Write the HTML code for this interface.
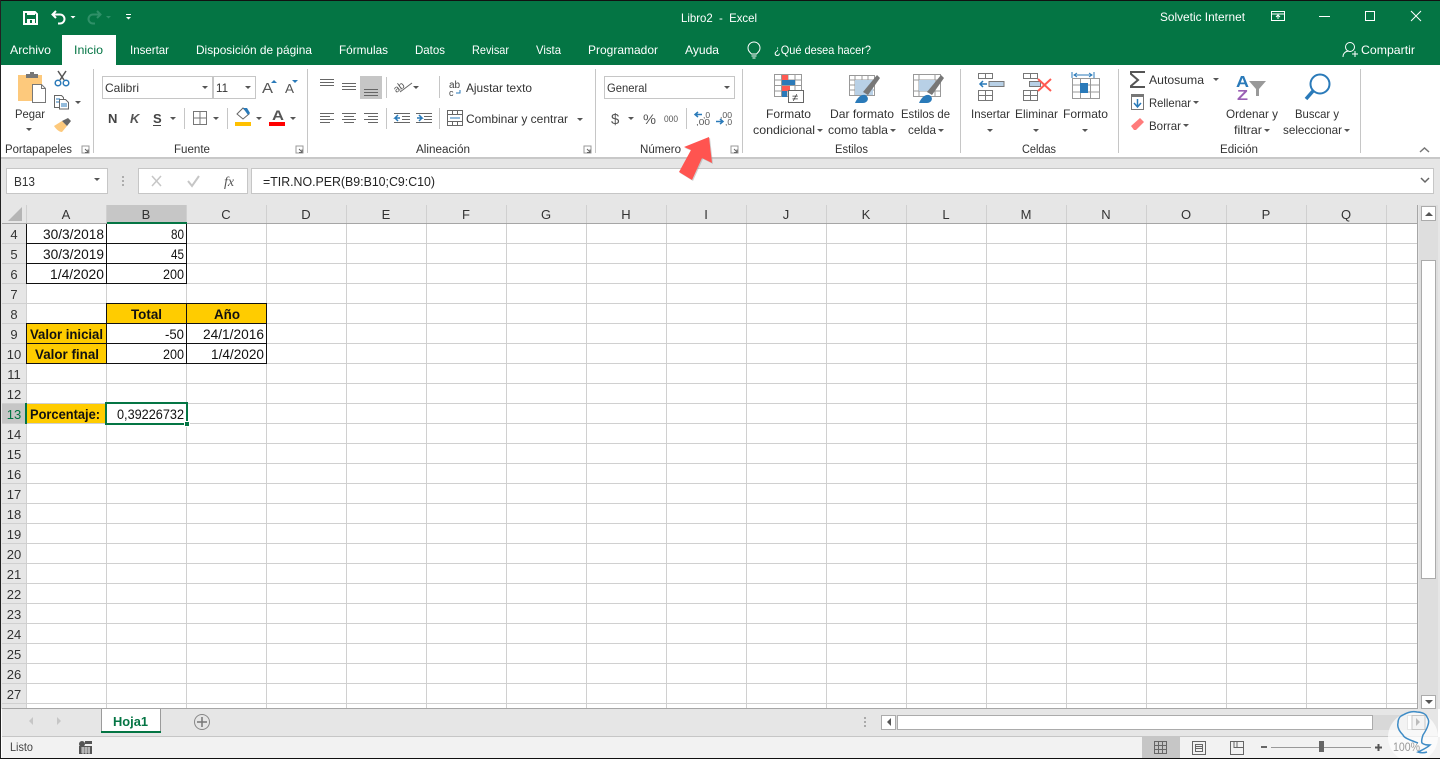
<!DOCTYPE html>
<html><head><meta charset="utf-8"><title>Libro2 - Excel</title>
<style>
html,body{margin:0;padding:0;background:#fff;width:1440px;height:759px;overflow:hidden}
svg{display:block;font-family:"Liberation Sans",sans-serif}
.w{fill:#fff;font-size:12px}
.r{fill:#333;font-size:12px}
.g{fill:#333;font-size:11.5px}
.c{fill:#111;font-size:13.5px}
.b{fill:#111;font-size:13.5px;font-weight:bold}
.h{fill:#333;font-size:13px;text-anchor:middle}
.l{stroke:#666;stroke-width:1;fill:none}
</style></head><body>
<svg width="1440" height="759" viewBox="0 0 1440 759" xmlns="http://www.w3.org/2000/svg">
<defs><path id="dd" d="M-3 0h6l-3 3z" fill="#555"/><path id="ddw" d="M-2.500 0h5l-2.500 2.500z" fill="#fff"/>
<g id="lch"><path d="M0 0h7v7h-7z" fill="none" stroke="#999"/><path d="M3 3l3 3M6 3.500v3h-3" fill="none" stroke="#666"/></g></defs>
<!-- backgrounds -->
<rect width="1440" height="759" fill="#fff"/>
<rect width="1440" height="65" fill="#047544"/>
<rect y="0" width="1440" height="1" fill="#111"/>
<rect x="62" y="35" width="54" height="30" fill="#fff"/>
<rect y="65" width="1440" height="92" fill="#fff"/>
<rect y="157" width="1440" height="2" fill="#c8c8c8"/>
<rect y="159" width="1440" height="550" fill="#e6e6e6"/>
<!-- title -->
<text class="w" x="681" y="22" textLength="76" lengthAdjust="spacingAndGlyphs" xml:space="preserve">Libro2  -  Excel</text>
<text class="w" x="1160" y="21" textLength="85" lengthAdjust="spacingAndGlyphs">Solvetic Internet</text>
<!-- QAT -->
<path d="M24 12h11l2 2v10h-13z" fill="none" stroke="#fff" stroke-width="2"/>
<rect x="27" y="11" width="8" height="4" fill="#fff"/><rect x="27" y="19" width="8" height="5" fill="#fff"/><rect x="30" y="20" width="2" height="3" fill="#047544"/>
<path d="M56 11l-3.500 3.500 3.500 3.500M53 14.500h7a4.500 4.500 0 0 1 0 9h-2" fill="none" stroke="#fff" stroke-width="2"/>
<use href="#ddw" x="73" y="16"/>
<path d="M97 11l3.500 3.500-3.500 3.500M100 14.500h-7a4.500 4.500 0 0 0 0 9h2" fill="none" stroke="#2f9068" stroke-width="2"/>
<path d="M106 16h5l-2.500 2.500z" fill="#2f9068"/>
<path d="M126 14h5v1h-5z" fill="#fff"/><use href="#ddw" x="128.500" y="17"/>
<!-- window controls -->
<path d="M1271.500 11.500h13v9h-13zM1271.500 14h13M1278 19v-4M1276 17l2-2 2 2" fill="none" stroke="#fff"/>
<rect x="1319" y="16" width="11" height="1" fill="#fff"/>
<rect x="1365.500" y="11.500" width="9" height="9" fill="none" stroke="#fff"/>
<path d="M1411 11l10 10M1421 11l-10 10" stroke="#fff" fill="none"/>
<!-- tabs -->
<text class="w" x="10" y="54" textLength="41" lengthAdjust="spacingAndGlyphs">Archivo</text>
<text x="74" y="54" font-size="12" fill="#047544" textLength="29" lengthAdjust="spacingAndGlyphs">Inicio</text>
<text class="w" x="130" y="54" textLength="39" lengthAdjust="spacingAndGlyphs">Insertar</text>
<text class="w" x="196" y="54" textLength="116" lengthAdjust="spacingAndGlyphs">Disposición de página</text>
<text class="w" x="339" y="54" textLength="49" lengthAdjust="spacingAndGlyphs">Fórmulas</text>
<text class="w" x="415" y="54" textLength="30" lengthAdjust="spacingAndGlyphs">Datos</text>
<text class="w" x="472" y="54" textLength="37" lengthAdjust="spacingAndGlyphs">Revisar</text>
<text class="w" x="536" y="54" textLength="25" lengthAdjust="spacingAndGlyphs">Vista</text>
<text class="w" x="588" y="54" textLength="70" lengthAdjust="spacingAndGlyphs">Programador</text>
<text class="w" x="685" y="54" textLength="34" lengthAdjust="spacingAndGlyphs">Ayuda</text>
<text class="w" x="774" y="54" textLength="97" lengthAdjust="spacingAndGlyphs">¿Qué desea hacer?</text>
<text class="w" x="1361" y="54" textLength="54" lengthAdjust="spacingAndGlyphs">Compartir</text>
<path d="M751.500 54c-2-2-3.500-3.500-3.500-6a6 6 0 0 1 12 0c0 2.500-1.500 4-3.500 6zM751.500 56h5M752.500 58h3" fill="none" stroke="#fff"/>
<circle cx="1350" cy="47" r="4.500" fill="none" stroke="#fff"/><path d="M1343 57c0-4 3-6 6-6M1352 54h6M1355 51v6" fill="none" stroke="#fff"/>
<!-- ribbon separators -->
<path d="M93.500 69v84M307.500 69v84M595.500 69v84M742.500 69v84M960.500 69v84M1118.500 69v84M1360.500 69v84" stroke="#c6c6c6"/>
<path d="M184.500 108v21M227.500 108v21M386.500 77v21M386.500 108v21M439.500 76v22M439.500 108v21M686.500 108v21" stroke="#c6c6c6"/>
<!-- group labels -->
<text class="g" x="5" y="153" textLength="67" lengthAdjust="spacingAndGlyphs">Portapapeles</text>
<text class="g" x="174" y="153" textLength="36" lengthAdjust="spacingAndGlyphs">Fuente</text>
<text class="g" x="416" y="153" textLength="54" lengthAdjust="spacingAndGlyphs">Alineación</text>
<text class="g" x="640" y="153" textLength="41" lengthAdjust="spacingAndGlyphs">Número</text>
<text class="g" x="835" y="153" textLength="33" lengthAdjust="spacingAndGlyphs">Estilos</text>
<text class="g" x="1022" y="153" textLength="34" lengthAdjust="spacingAndGlyphs">Celdas</text>
<text class="g" x="1220" y="153" textLength="38" lengthAdjust="spacingAndGlyphs">Edición</text>
<use href="#lch" x="82" y="146"/><use href="#lch" x="296" y="146"/><use href="#lch" x="584" y="146"/><use href="#lch" x="731" y="146"/>
<!-- clipboard -->
<rect x="18" y="75" width="24" height="26" fill="#fdc97c"/>
<path d="M26 74h4v-2h4v2h4v4h-12z" fill="#777"/>
<path d="M32.500 84.500h9l4 4v14h-13z" fill="#fff" stroke="#777"/><path d="M41.500 84.500v4h4" fill="none" stroke="#777"/>
<text class="r" x="15" y="118" textLength="30" lengthAdjust="spacingAndGlyphs">Pegar</text><use href="#dd" x="29" y="128"/>
<!-- scissors -->
<path d="M58 71l6 9M66 71l-6 9" stroke="#555" stroke-width="1.500" fill="none"/>
<circle cx="58" cy="83" r="2.800" fill="none" stroke="#2a7ab9" stroke-width="1.500"/><circle cx="66" cy="83" r="2.800" fill="none" stroke="#2a7ab9" stroke-width="1.500"/>
<!-- copy -->
<path d="M54.500 95.500h7l2 2v10h-9z" fill="#fff" stroke="#666"/><path d="M59.500 99.500h6l3 3v6.500h-9z" fill="#fff" stroke="#666"/>
<path d="M56 99h4M56 102h3M61 104h6M61 106h6" stroke="#2a7ab9"/><use href="#dd" x="78" y="101"/>
<!-- brush -->
<path d="M54 126l8-5 5 5-5 6c-3 0-6-3-8-6z" fill="#fdc97c"/><path d="M62 121l6-3 3 3-4 5z" fill="#666"/>
<!-- font -->
<rect x="102.500" y="76.500" width="110" height="22" fill="#fff" stroke="#c6c6c6"/>
<rect x="213.500" y="76.500" width="42" height="22" fill="#fff" stroke="#c6c6c6"/>
<text class="r" x="105" y="92" textLength="34" lengthAdjust="spacingAndGlyphs">Calibri</text>
<text class="r" x="216" y="92" textLength="12" lengthAdjust="spacingAndGlyphs">11</text>
<use href="#dd" x="205" y="86"/><use href="#dd" x="248" y="86"/>
<text x="262" y="93" font-size="15" fill="#555" textLength="11" lengthAdjust="spacingAndGlyphs">A</text><path d="M271 83h6l-3-3z" fill="#2a7ab9"/>
<text x="285" y="93" font-size="13" fill="#555" textLength="9" lengthAdjust="spacingAndGlyphs">A</text><path d="M292 80h6l-3 3z" fill="#2a7ab9"/>
<text x="108" y="123" font-size="13" font-weight="bold" fill="#444">N</text>
<text x="130" y="123" font-size="13" font-weight="bold" font-style="italic" fill="#555">K</text>
<text x="153" y="123" font-size="13" font-weight="bold" fill="#444">S</text><rect x="153" y="125" width="8" height="1" fill="#444"/>
<use href="#dd" x="173" y="117"/>
<path d="M193.500 111.500h13v13h-13zM200 111.500v13M193.500 118h13" fill="none" stroke="#777"/><use href="#dd" x="216" y="117"/>
<path d="M237 114l6-6 6 6-6 5z" fill="#fff" stroke="#666"/><path d="M243 108l4-0 3 5-2 2z" fill="#2a7ab9"/>
<rect x="235" y="122" width="16" height="4" fill="#ffc000"/><use href="#dd" x="259" y="117"/>
<text x="272" y="120" font-size="14" font-weight="bold" fill="#555" textLength="12" lengthAdjust="spacingAndGlyphs">A</text>
<rect x="269" y="122" width="16" height="4" fill="#f00"/><use href="#dd" x="293" y="117"/>
<!-- alignment -->
<rect x="360" y="76" width="22" height="23" fill="#c6c6c6"/>
<path d="M320 79.500h14M320 82.500h14M320 85.500h14M342 83.500h14M342 86.500h14M342 89.500h14M364 89.500h14M364 92.500h14M364 95.500h14" stroke="#666" stroke-width="1"/>
<path d="M320 113.500h14M320 116.500h10M320 119.500h14M320 122.500h10M342 113.500h14M344 116.500h10M342 119.500h14M344 122.500h10M364 113.500h14M368 116.500h10M364 119.500h14M368 122.500h10" stroke="#666"/>
<path d="M394 113.500h16M402 116.500h8M402 119.500h8M394 122.500h16M416 113.500h16M424 116.500h8M424 119.500h8M416 122.500h16" stroke="#666"/>
<path d="M400 118h-5l3-3M395 118l3 3M417 118h5l-3-3M422 118l-3 3" stroke="#2a7ab9" fill="none" stroke-width="1.500"/>
<text x="394" y="90" font-size="10" fill="#555" transform="rotate(-35 400 88)">ab</text><path d="M400 92l12-9" stroke="#666"/><use href="#dd" x="416" y="86"/>
<text x="449" y="88" font-size="10" fill="#444">ab</text><text x="449" y="96" font-size="9" fill="#444">c</text><path d="M460 90v3h-4" fill="none" stroke="#2a7ab9"/>
<text class="r" x="466" y="92" textLength="66" lengthAdjust="spacingAndGlyphs">Ajustar texto</text>
<path d="M447.500 110.500h15v15h-15zM447.500 114.500h15M447.500 121.500h15M452.500 110.500v4M457.500 110.500v4M452.500 121.500v4M457.500 121.500v4" fill="none" stroke="#666"/><path d="M450 118h10" stroke="#2a7ab9"/>
<text class="r" x="466" y="123" textLength="102" lengthAdjust="spacingAndGlyphs">Combinar y centrar</text><use href="#dd" x="580" y="118"/>
<!-- number -->
<rect x="604.500" y="76.500" width="130" height="22" fill="#fff" stroke="#c6c6c6"/>
<text class="r" x="607" y="92" textLength="40" lengthAdjust="spacingAndGlyphs">General</text><use href="#dd" x="727" y="86"/>
<text x="611" y="124" font-size="15" fill="#555">$</text><use href="#dd" x="631" y="117"/>
<text x="643" y="124" font-size="14" fill="#555" textLength="13" lengthAdjust="spacingAndGlyphs">%</text>
<text x="664" y="122" font-size="9" fill="#555" textLength="14" lengthAdjust="spacingAndGlyphs">000</text>
<text x="703" y="118" font-size="8.500" fill="#555">,0</text><text x="696" y="125" font-size="8.500" fill="#555" textLength="14" lengthAdjust="spacingAndGlyphs">,00</text>
<path d="M702 114.500h-7M698 112l-3 2.500 3 2.500" stroke="#2a7ab9" fill="none" stroke-width="1.500"/>
<text x="720" y="118" font-size="8.500" fill="#555" textLength="12" lengthAdjust="spacingAndGlyphs">,00</text><text x="725" y="125" font-size="8.500" fill="#555">,0</text>
<path d="M716 121.500h7M720 119l3 2.500-3 2.500" stroke="#2a7ab9" fill="none" stroke-width="1.500"/>
<!-- styles -->
<path d="M774.500 74.500h27v22h-27zM774.500 80h27M774.500 85.500h27M774.500 91h27M781.500 74.500v22M788 74.500v22M795 74.500v22" fill="none" stroke="#999"/>
<rect x="782" y="75" width="6" height="5" fill="#ff5a52"/><rect x="782" y="80" width="13" height="5" fill="#2a7ab9"/><rect x="782" y="86" width="8" height="5" fill="#ff5a52"/><rect x="782" y="91" width="5" height="6" fill="#2a7ab9"/>
<rect x="788.500" y="90.500" width="15" height="12" fill="#fff" stroke="#666"/><text x="792" y="101" font-size="11" fill="#333">≠</text>
<path d="M849.500 75.500h25v20h-25zM849.500 80h25M855 75.500v20M862 75.500v20M868 75.500v20M849.500 85h25M849.500 90h25" fill="none" stroke="#999"/>
<rect x="855" y="80" width="18" height="15" fill="#b8d0e6"/><path d="M863 92l14-17 3 3-12 17z" fill="#777"/><path d="M855 103c2-5 6-9 10-8 5 2 3 8-2 8z" fill="#2a7ab9"/>
<path d="M913.500 74.500h27v22h-27zM913.500 80h27M919 74.500v22M935 74.500v22M913.500 91h27" fill="none" stroke="#999"/>
<rect x="919" y="80" width="16" height="11" fill="#b8d0e6"/><path d="M927 92l14-17 3 3-12 17z" fill="#777"/><path d="M919 103c2-5 6-9 10-8 5 2 3 8-2 8z" fill="#2a7ab9"/>
<text class="r" x="766" y="118" textLength="45" lengthAdjust="spacingAndGlyphs">Formato</text>
<text class="r" x="753" y="134" textLength="62" lengthAdjust="spacingAndGlyphs">condicional</text><use href="#dd" x="820" y="129"/>
<text class="r" x="830" y="118" textLength="64" lengthAdjust="spacingAndGlyphs">Dar formato</text>
<text class="r" x="828" y="134" textLength="60" lengthAdjust="spacingAndGlyphs">como tabla</text><use href="#dd" x="893" y="129"/>
<text class="r" x="901" y="118" textLength="49" lengthAdjust="spacingAndGlyphs">Estilos de</text>
<text class="r" x="908" y="134" textLength="28" lengthAdjust="spacingAndGlyphs">celda</text><use href="#dd" x="941" y="129"/>
<!-- cells -->
<path d="M978.500 73.500h14v5h-14zM985.500 73.500v5M978.500 90.500h14v10h-14zM978.500 95.500h14M985.500 90.500v10" fill="none" stroke="#777"/>
<rect x="989" y="81.500" width="15" height="5" fill="#b8d0e6" stroke="#777"/><path d="M987 84h-7M983 81l-3 3 3 3" stroke="#2a7ab9" fill="none" stroke-width="1.500"/>
<text class="r" x="971" y="118" textLength="39" lengthAdjust="spacingAndGlyphs">Insertar</text><use href="#dd" x="990" y="129"/>
<path d="M1023.500 73.500h14v5h-14zM1030.500 73.500v5M1023.500 90.500h14v10h-14zM1023.500 95.500h14M1030.500 90.500v10" fill="none" stroke="#777"/>
<rect x="1029.500" y="81.500" width="11" height="5" fill="#b8d0e6" stroke="#777"/><path d="M1038 79l13 12M1051 79l-13 12" stroke="#ff5a52" stroke-width="2"/>
<text class="r" x="1015" y="118" textLength="43" lengthAdjust="spacingAndGlyphs">Eliminar</text><use href="#dd" x="1036" y="129"/>
<path d="M1072 72v6M1094 72v6M1074 75h18M1077 73l-3 2 3 2M1089 73l3 2-3 2" stroke="#2a7ab9" fill="none"/>
<path d="M1072.500 78.500h27v20h-27zM1072.500 85h27M1072.500 92h27M1080.500 78.500v20M1090.500 78.500v20" fill="none" stroke="#999"/><rect x="1080" y="83" width="8" height="10" fill="#2a7ab9"/>
<text class="r" x="1063" y="118" textLength="45" lengthAdjust="spacingAndGlyphs">Formato</text><use href="#dd" x="1085" y="129"/>
<!-- edicion -->
<path d="M1145 72h-14v2l7 6-7 6v1h14" fill="none" stroke="#555" stroke-width="2"/>
<text class="r" x="1149" y="84" textLength="55" lengthAdjust="spacingAndGlyphs">Autosuma</text><use href="#dd" x="1216" y="78"/>
<rect x="1131.500" y="95.500" width="12" height="14" fill="#fff" stroke="#777"/><rect x="1131" y="94" width="13" height="3" fill="#777"/><path d="M1137.500 99v8M1134 103l3.500 4 3.500-4" stroke="#2a7ab9" fill="none" stroke-width="1.500"/>
<text class="r" x="1149" y="107" textLength="42" lengthAdjust="spacingAndGlyphs">Rellenar</text><use href="#dd" x="1196" y="101"/>
<path d="M1131 126l9-8 4 4-8 8h-2z" fill="#ff7b7b"/>
<text class="r" x="1149" y="130" textLength="32" lengthAdjust="spacingAndGlyphs">Borrar</text><use href="#dd" x="1186" y="124"/>
<text x="1236" y="87" font-size="16" font-weight="bold" fill="#2a7ab9" textLength="13" lengthAdjust="spacingAndGlyphs">A</text><text x="1237" y="100" font-size="15" font-weight="bold" fill="#9a5fb4" textLength="11" lengthAdjust="spacingAndGlyphs">Z</text>
<path d="M1249 81h17l-7 8v7h-3v-7z" fill="#999"/>
<text class="r" x="1226" y="118" textLength="52" lengthAdjust="spacingAndGlyphs">Ordenar y</text>
<text class="r" x="1234" y="134" textLength="28" lengthAdjust="spacingAndGlyphs">filtrar</text><use href="#dd" x="1267" y="129"/>
<circle cx="1320" cy="84" r="9.500" fill="none" stroke="#2a7ab9" stroke-width="2"/><path d="M1313 91l-7 8" stroke="#2a7ab9" stroke-width="3.500"/>
<text class="r" x="1295" y="118" textLength="44" lengthAdjust="spacingAndGlyphs">Buscar y</text>
<text class="r" x="1283" y="134" textLength="59" lengthAdjust="spacingAndGlyphs">seleccionar</text><use href="#dd" x="1347" y="129"/>
<path d="M1420 152l4.500-4 4.500 4" stroke="#777" fill="none" stroke-width="1.500"/>
<!-- formula bar -->
<rect x="6.500" y="168.500" width="101" height="25" fill="#fff" stroke="#c6c6c6"/>
<text x="14" y="186" font-size="13" fill="#333" textLength="21" lengthAdjust="spacingAndGlyphs">B13</text><use href="#dd" x="97" y="178"/>
<path d="M123 176v2M123 180v2M123 184v2" stroke="#999" stroke-width="1.500"/>
<rect x="138.500" y="168.500" width="109" height="25" fill="#fff" stroke="#c6c6c6"/>
<path d="M152 176l9 10M161 176l-9 10" stroke="#c6c6c6" stroke-width="1.500"/>
<path d="M188 181l4 5 7-10" stroke="#c6c6c6" stroke-width="2" fill="none"/>
<text x="224" y="186" font-size="14" font-style="italic" font-family="Liberation Serif" fill="#555">fx</text>
<rect x="251.500" y="168.500" width="1182" height="25" fill="#fff" stroke="#c6c6c6"/>
<text x="263" y="186" font-size="13" fill="#222" textLength="172" lengthAdjust="spacingAndGlyphs">=TIR.NO.PER(B9:B10;C9:C10)</text>
<path d="M1421 178l4 4 4-4" stroke="#666" fill="none" stroke-width="1.500"/>
<!-- arrow -->
<path d="M710 138l-25 10 7 3-12 22 13 8 10-22 10 5z" fill="#999" opacity=".45"/>
<path d="M709 137l-25 10 7 3-12 22 13 8 10-22 10 5z" fill="#ff5450"/>
<!-- grid -->
<rect x="27" y="224" width="1391" height="484" fill="#fff"/>
<rect x="2" y="205" width="1416" height="18" fill="#e6e6e6"/>
<rect x="2" y="224" width="24" height="484" fill="#e6e6e6"/>
<rect x="107" y="205" width="79" height="17" fill="#c6c6c6"/>
<rect x="2" y="404" width="23" height="19" fill="#c6c6c6"/>
<path d="M22 207v14h-14z" fill="#b5b5b5"/>
<path d="M26.500 205v503M106.500 205v503M186.500 205v503M266.500 205v503M346.500 205v503M426.500 205v503M506.500 205v503M586.500 205v503M666.500 205v503M746.500 205v503M826.500 205v503M906.500 205v503M986.500 205v503M1066.500 205v503M1146.500 205v503M1226.500 205v503M1306.500 205v503M1386.500 205v503" stroke="#d0d0d0"/>
<path d="M2 243.500h1416M2 263.500h1416M2 283.500h1416M2 303.500h1416M2 323.500h1416M2 343.500h1416M2 363.500h1416M2 383.500h1416M2 403.500h1416M2 423.500h1416M2 443.500h1416M2 463.500h1416M2 483.500h1416M2 503.500h1416M2 523.500h1416M2 543.500h1416M2 563.500h1416M2 583.500h1416M2 603.500h1416M2 623.500h1416M2 643.500h1416M2 663.500h1416M2 683.500h1416M2 703.500h1416" stroke="#d0d0d0"/>
<rect x="2" y="223" width="1416" height="1" fill="#a6a6a6"/>
<rect x="107" y="222" width="80" height="2" fill="#047544"/>
<rect x="1417" y="205" width="1" height="503" fill="#a6a6a6"/><rect x="2" y="708" width="1416" height="1" fill="#a6a6a6"/>
<rect x="25" y="403" width="2" height="21" fill="#047544"/>
<!-- headers -->
<text class="h" x="66" y="219">A</text><text class="h" x="146" y="219">B</text><text class="h" x="226" y="219">C</text><text class="h" x="306" y="219">D</text><text class="h" x="386" y="219">E</text><text class="h" x="466" y="219">F</text><text class="h" x="546" y="219">G</text><text class="h" x="626" y="219">H</text><text class="h" x="706" y="219">I</text><text class="h" x="786" y="219">J</text><text class="h" x="866" y="219">K</text><text class="h" x="946" y="219">L</text><text class="h" x="1026" y="219">M</text><text class="h" x="1106" y="219">N</text><text class="h" x="1186" y="219">O</text><text class="h" x="1266" y="219">P</text><text class="h" x="1346" y="219">Q</text>
<text class="h" x="14" y="239">4</text><text class="h" x="14" y="259">5</text><text class="h" x="14" y="279">6</text><text class="h" x="14" y="299">7</text><text class="h" x="14" y="319">8</text><text class="h" x="14" y="339">9</text><text class="h" x="14" y="359">10</text><text class="h" x="14" y="379">11</text><text class="h" x="14" y="399">12</text><text class="h" x="14" y="419" style="fill:#047544">13</text><text class="h" x="14" y="439">14</text><text class="h" x="14" y="459">15</text><text class="h" x="14" y="479">16</text><text class="h" x="14" y="499">17</text><text class="h" x="14" y="519">18</text><text class="h" x="14" y="539">19</text><text class="h" x="14" y="559">20</text><text class="h" x="14" y="579">21</text><text class="h" x="14" y="599">22</text><text class="h" x="14" y="619">23</text><text class="h" x="14" y="639">24</text><text class="h" x="14" y="659">25</text><text class="h" x="14" y="679">26</text><text class="h" x="14" y="699">27</text>
<!-- fills -->
<rect x="107" y="304" width="160" height="19" fill="#ffcc00"/>
<rect x="27" y="324" width="80" height="39" fill="#ffcc00"/>
<rect x="27" y="404" width="79" height="19" fill="#ffcc00"/>
<!-- black borders -->
<path d="M26.500 224v60M106.500 224v60M186.500 224v60M26 243.500h161M26 263.500h161M26 283.500h161M106 303.500h161M106 323.500h161M26 343.500h241M26 363.500h241M26 323.500h81M26.500 323v41M106.500 303v61M186.500 303v61M266.500 303v61" stroke="#111" fill="none"/>
<!-- cell text -->
<text class="c" x="43" y="239" textLength="61" lengthAdjust="spacingAndGlyphs">30/3/2018</text>
<text class="c" x="43" y="259" textLength="61" lengthAdjust="spacingAndGlyphs">30/3/2019</text>
<text class="c" x="50" y="279" textLength="54" lengthAdjust="spacingAndGlyphs">1/4/2020</text>
<text class="c" x="171" y="239" textLength="13" lengthAdjust="spacingAndGlyphs">80</text>
<text class="c" x="171" y="259" textLength="13" lengthAdjust="spacingAndGlyphs">45</text>
<text class="c" x="163" y="279" textLength="21" lengthAdjust="spacingAndGlyphs">200</text>
<text class="b" x="131" y="319" textLength="31" lengthAdjust="spacingAndGlyphs">Total</text>
<text class="b" x="214" y="319" textLength="26" lengthAdjust="spacingAndGlyphs">Año</text>
<text class="b" x="30" y="339" textLength="73" lengthAdjust="spacingAndGlyphs">Valor inicial</text>
<text class="b" x="35" y="359" textLength="64" lengthAdjust="spacingAndGlyphs">Valor final</text>
<text class="c" x="165" y="339" textLength="19" lengthAdjust="spacingAndGlyphs">-50</text>
<text class="c" x="163" y="359" textLength="21" lengthAdjust="spacingAndGlyphs">200</text>
<text class="c" x="203" y="339" textLength="61" lengthAdjust="spacingAndGlyphs">24/1/2016</text>
<text class="c" x="211" y="359" textLength="53" lengthAdjust="spacingAndGlyphs">1/4/2020</text>
<text class="b" x="30" y="419" textLength="70" lengthAdjust="spacingAndGlyphs">Porcentaje:</text>
<text class="c" x="117" y="419" textLength="67" lengthAdjust="spacingAndGlyphs">0,39226732</text>
<!-- selection -->
<rect x="106" y="403" width="81" height="21" fill="none" stroke="#047544" stroke-width="2"/>
<rect x="184" y="421" width="6" height="6" fill="#fff"/><rect x="185" y="422" width="4" height="4" fill="#047544"/>
<!-- vscroll -->
<rect x="1419" y="205" width="19" height="504" fill="#dedede"/>
<rect x="1421.500" y="206.500" width="14" height="14" fill="#fff" stroke="#ababab"/><path d="M1425 216h8l-4-4z" fill="#555"/>
<rect x="1421.500" y="260.500" width="14" height="318" fill="#fff" stroke="#ababab"/>
<rect x="1421.500" y="695.500" width="14" height="13" fill="#fff" stroke="#ababab"/><path d="M1425 700h8l-4 4z" fill="#555"/>
<!-- sheet tabs -->
<rect x="2" y="709" width="1436" height="27" fill="#e6e6e6"/>
<path d="M33 717v8l-4-4zM57 717v8l4-4z" fill="#c6c6c6"/>
<path d="M101.500 709v23M160.500 709v23" stroke="#9b9b9b"/>
<rect x="102" y="709" width="58" height="22" fill="#fff"/>
<rect x="101" y="731" width="60" height="2" fill="#047544"/>
<text x="113" y="726" font-size="13" font-weight="bold" fill="#047544" textLength="35" lengthAdjust="spacingAndGlyphs">Hoja1</text>
<circle cx="202" cy="722" r="7.500" fill="none" stroke="#888"/><path d="M197 722h10M202 717v10" stroke="#777" stroke-width="1.500"/>
<path d="M865 717v2M865 721v2M865 725v2" stroke="#aaa" stroke-width="2"/>
<rect x="881.500" y="715.500" width="14" height="14" fill="#fff" stroke="#ababab"/><path d="M891 718v8l-4-4z" fill="#555"/>
<rect x="896" y="715" width="522" height="15" fill="#d8d8d8"/>
<rect x="897.500" y="715.500" width="475" height="14" fill="#fff" stroke="#ababab"/>
<rect x="1407.500" y="715.500" width="13" height="14" fill="#fff" stroke="#ababab"/><path d="M1412 718v8l4-4z" fill="#aaa"/>
<!-- status -->
<rect x="2" y="736" width="1436" height="1" fill="#c6c6c6"/>
<rect x="2" y="737" width="1438" height="21" fill="#f2f2f2"/>
<text x="10" y="751" font-size="12" fill="#444" textLength="23" lengthAdjust="spacingAndGlyphs">Listo</text>
<circle cx="82" cy="744" r="3" fill="#555"/><path d="M85 741h7v3h-7zM79 746h13v8h-13z" fill="#555"/><path d="M81 748h9M81 750h9M81 752h9M83 747v7M86 747v7M89 747v7" stroke="#f2f2f2" stroke-width=".8"/>
<rect x="1142" y="737" width="38" height="21" fill="#c6c6c6"/>
<path d="M1154.500 741.500h12v12h-12zM1154.500 745.500h12M1154.500 749.500h12M1158.500 741.500v12M1162.500 741.500v12" fill="none" stroke="#666"/>
<path d="M1192.500 741.500h13v13h-13zM1195.500 744.500h7v7h-7zM1196 746.500h6M1196 748.500h6" fill="none" stroke="#666"/>
<path d="M1230.500 741.500h13v13h-13zM1237 741.500v6h6.500M1234 741.500v6h3" fill="none" stroke="#666"/>
<rect x="1261" y="746" width="6" height="2" fill="#666"/><rect x="1271" y="747" width="100" height="1" fill="#999"/><rect x="1319" y="741" width="5" height="11" fill="#666"/>
<path d="M1375 747.500h7M1378.500 744v7" stroke="#555" stroke-width="2"/>
<!-- watermark -->
<circle cx="1413" cy="737" r="25" fill="#fff" opacity=".7"/>
<path d="M1412 715.500h13v14h-13z" fill="#f4f4f4" stroke="#c6c6c6"/><path d="M1416 718v8l4-4z" fill="#bbb"/>
<text x="1393" y="751" font-size="12" fill="#999" textLength="27" lengthAdjust="spacingAndGlyphs">100%</text>
<path d="M1418 743C1410 740 1404 738 1403 735C1399 731 1397 727 1398 723C1398 719 1400 716 1403 715C1408 712 1413 711 1417 712C1422 712 1426 714 1427 717C1429 720 1429 722 1428 725C1427 729 1425 732 1423 735C1422 738 1421 741 1422 743C1424 745 1427 745 1430 745C1427 748 1422 750 1418 752C1421 753 1424 753 1427 752" fill="none" stroke="#3f8cc6" stroke-width="1.500"/>
<!-- frame -->
<rect x="0" y="0" width="1" height="759" fill="#222"/>
<rect x="0" y="758" width="1440" height="1" fill="#111"/>
</svg>
</body></html>
